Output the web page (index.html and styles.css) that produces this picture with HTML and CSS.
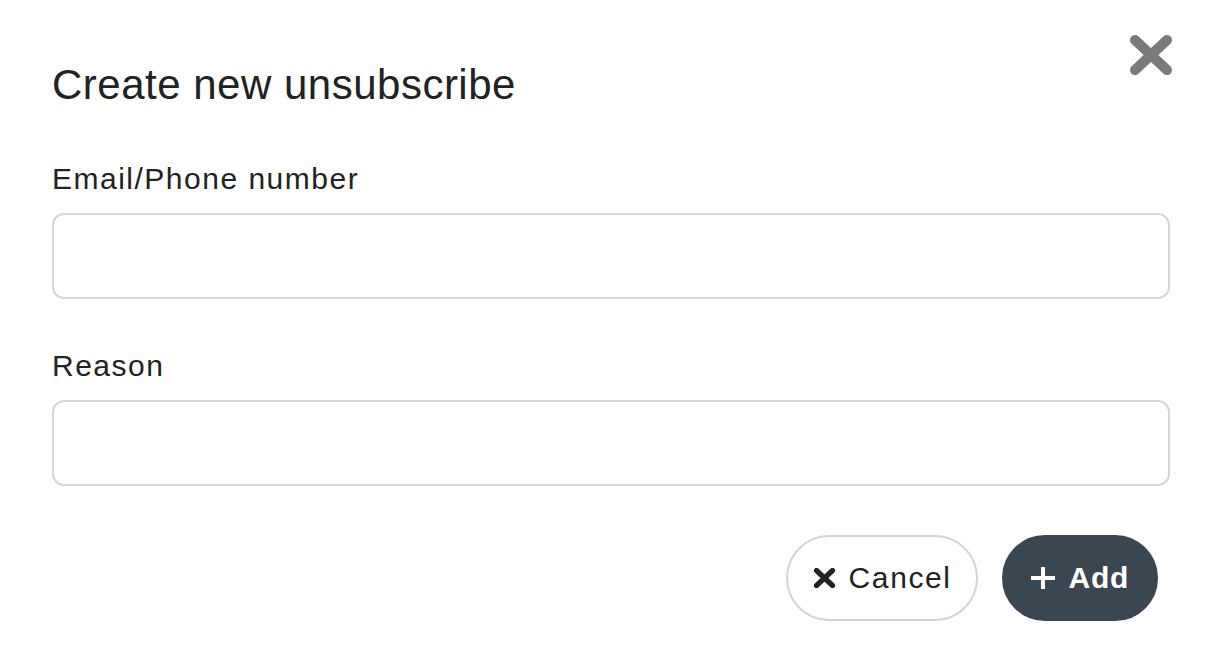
FILE: index.html
```html
<!DOCTYPE html>
<html>
<head>
<meta charset="utf-8">
<link rel="stylesheet" href="styles.css">
</head>
<body>
<div class="modal">
  <div class="modal-header">
    <h1 class="modal-title">Create new unsubscribe</h1>
    <button class="close-btn" aria-label="Close">
      <svg width="44" height="42" viewBox="0 0 44 42"><path d="M6 6 L38 36 M38 6 L6 36" stroke="#7a7a7a" stroke-width="10" stroke-linecap="round" fill="none"/></svg>
    </button>
  </div>
  <form class="modal-body">
    <div class="form-group">
      <label class="form-label">Email/Phone number</label>
      <input class="form-input" type="text">
    </div>
    <div class="form-group">
      <label class="form-label">Reason</label>
      <input class="form-input" type="text">
    </div>
  </form>
  <div class="modal-footer">
    <button class="btn btn-cancel">
      <svg width="23" height="20" viewBox="0 0 23 20"><path d="M3.5 2.5 L19.5 17.5 M19.5 2.5 L3.5 17.5" stroke="#222" stroke-width="5.2" stroke-linecap="round" fill="none"/></svg>
      <span>Cancel</span>
    </button>
    <button class="btn btn-add">
      <svg width="26" height="24" viewBox="0 0 26 24"><path d="M13 1 V23 M1 12 H25" stroke="#fff" stroke-width="4" fill="none"/></svg>
      <span>Add</span>
    </button>
  </div>
</div>
</body>
</html>
```
FILE: styles.css
```css
html, body {
  margin: 0;
  padding: 0;
  background: #fff;
}
body {
  font-family: "Liberation Sans", Arial, Helvetica, sans-serif;
  color: #222;
}
.modal {
  padding: 34px 52px 0 52px;
}
.modal-header {
  display: flex;
  justify-content: space-between;
  align-items: flex-start;
}
.modal-title {
  margin: 26px 0 0 0;
  font-size: 42px;
  font-weight: normal;
  line-height: 50px;
  letter-spacing: 0.5px;
}
.close-btn {
  border: 0;
  background: none;
  padding: 0;
  margin: 0 -1px 0 0;
  width: 44px;
  height: 42px;
  cursor: pointer;
}
.close-btn svg { display: block; }
.modal-body {
  margin: 51px 2px 0 0;
}
.form-group {
  display: flex;
  flex-direction: column;
  margin-bottom: 49px;
}
.form-label {
  font-size: 30px;
  line-height: 35px;
  letter-spacing: 1.5px;
  margin-bottom: 17px;
}
.form-input {
  box-sizing: border-box;
  height: 86px;
  border: 2px solid #d6d6d6;
  border-radius: 12px;
  background: #fff;
  margin: 0;
  outline: none;
}
.modal-footer {
  display: flex;
  justify-content: flex-end;
  gap: 24px;
  margin: 0 14px 0 0;
}
.btn {
  box-sizing: border-box;
  height: 86px;
  display: flex;
  align-items: center;
  gap: 13px;
  border-radius: 43px;
  font-family: "Liberation Sans", Arial, Helvetica, sans-serif;
  font-size: 30px;
  cursor: pointer;
  margin: 0;
}
.btn svg { display: block; }
.btn-cancel {
  background: #fff;
  border: 2px solid #d4d4d4;
  color: #222;
  padding: 0 24px 0 25px;
  letter-spacing: 1.6px;
}
.btn-add {
  background: #3c4651;
  border: 2px solid #3c4651;
  color: #fff;
  font-weight: bold;
  padding: 0 27px 0 26px;
  letter-spacing: 0.7px;
}
```
